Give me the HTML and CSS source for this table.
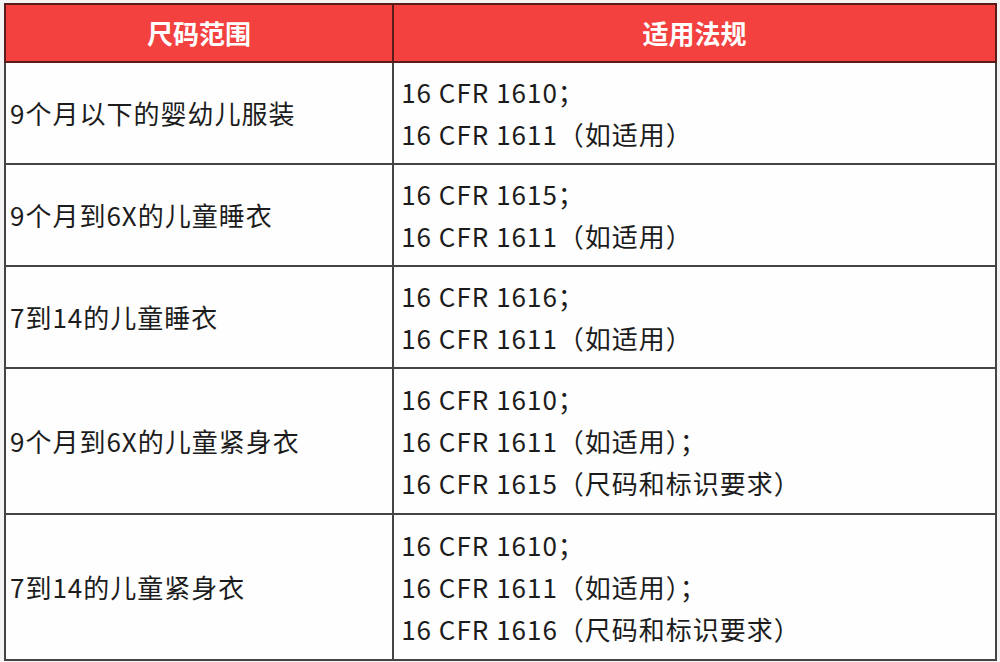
FILE: index.html
```html
<!DOCTYPE html>
<html lang="zh-CN">
<head>
<meta charset="utf-8">
<title>尺码范围与适用法规</title>
<link rel="stylesheet" href="styles.css">
</head>
<body>
<table class="rules">
  <colgroup>
    <col class="col-size">
    <col class="col-law">
  </colgroup>
  <thead>
    <tr class="head-row">
      <th>尺码范围</th>
      <th>适用法规</th>
    </tr>
  </thead>
  <tbody>
    <tr class="row-2">
      <td class="size">9个月以下的婴幼儿服装</td>
      <td class="law">16 CFR 1610；<br>16 CFR 1611（如适用）</td>
    </tr>
    <tr class="row-2">
      <td class="size">9个月到6X的儿童睡衣</td>
      <td class="law">16 CFR 1615；<br>16 CFR 1611（如适用）</td>
    </tr>
    <tr class="row-2">
      <td class="size">7到14的儿童睡衣</td>
      <td class="law">16 CFR 1616；<br>16 CFR 1611（如适用）</td>
    </tr>
    <tr class="row-3">
      <td class="size">9个月到6X的儿童紧身衣</td>
      <td class="law">16 CFR 1610；<br>16 CFR 1611（如适用）；<br>16 CFR 1615（尺码和标识要求）</td>
    </tr>
    <tr class="row-3">
      <td class="size">7到14的儿童紧身衣</td>
      <td class="law">16 CFR 1610；<br>16 CFR 1611（如适用）；<br>16 CFR 1616（尺码和标识要求）</td>
    </tr>
  </tbody>
</table>
</body>
</html>
```

FILE: styles.css
```css
html, body {
  margin: 0;
  padding: 0;
  background: #f4f4f4;
}
body {
  padding: 3px 0 0 4px;
  font-family: "Noto Sans CJK SC", "Noto Sans", sans-serif;
  color: #1c1c1c;
}
.rules {
  border-collapse: collapse;
  width: 993px;
  background: #fefefe;
  border: 2px solid #444;
}
.col-size { width: 389px; }
.col-law { width: 604px; }
.rules th,
.rules td {
  border: 2px solid #444;
  padding: 0;
  font-size: 26px;
  line-height: 42px;
}
.rules .head-row th {
  height: 56px;
  background: #f3413f;
  color: #fff;
  font-weight: 700;
  text-align: center;
  border-color: #5a1b1b;
}
.rules .row-2 td { height: 100px; }
.rules .row-3 td { height: 144px; }
.rules .size {
  padding-left: 4px;
  vertical-align: middle;
  letter-spacing: 1px;
}
.rules .law {
  padding-left: 7px;
  vertical-align: middle;
  letter-spacing: 1px;
}
```
